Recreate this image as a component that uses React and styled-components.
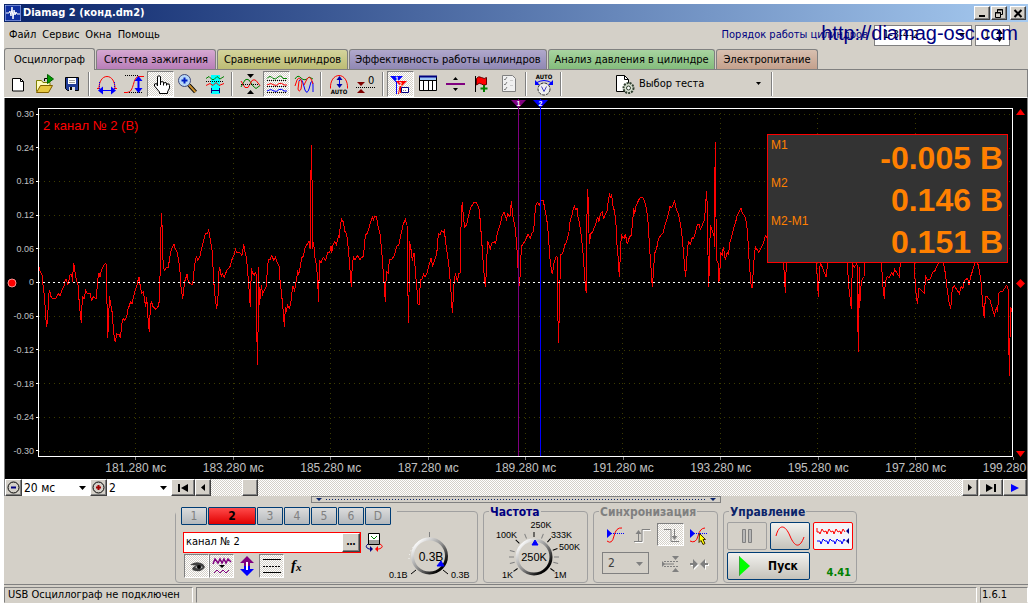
import React from "react";
import styled, { createGlobalStyle, css } from "styled-components";

const FACE = "#d4d0c8";
const UI_FONT = '"DejaVu Sans Condensed", "DejaVu Sans", "Liberation Sans", sans-serif';
const PLOT_FONT = '"Liberation Sans", Arial, sans-serif';

const dither = css`
  background: repeating-conic-gradient(#fff 0 25%, ${FACE} 0 50%) 0 0 / 2px 2px;
`;
const raised = css`
  border: 1px solid;
  border-color: #fff #404040 #404040 #fff;
  box-shadow: inset -1px -1px 0 #808080;
  background: ${FACE};
`;

const GlobalStyle = createGlobalStyle`
  * { box-sizing: border-box; }
  body { margin: 0; background: #fff; font: 11px/14px ${UI_FONT}; color: #000; }
  button, input, select { font: inherit; color: inherit; margin: 0; padding: 0; }
  svg { display: block; flex: none; }
`;

/* ---------- window frame ---------- */

const Page = styled.div`
  padding: 4px 4px 5px;
  min-width: 860px;
`;
const Window = styled.div`
  position: relative;
  background: ${FACE};
  overflow: hidden;
`;
const TitleBar = styled.header`
  display: flex;
  align-items: center;
  height: 18px;
  padding: 0 2px 0 1px;
  gap: 1px;
  background: linear-gradient(90deg, #0a246a, #a6caf0);
`;
const Title = styled.h1`
  flex: 1;
  margin: 0 0 0 1px;
  color: #fff;
  font: bold 11px/16px ${UI_FONT};
`;
const CaptionButton = styled.button`
  ${raised}
  display: grid;
  place-items: center;
  width: 16px;
  height: 14px;
  margin-left: ${(p) => (p.$apart ? 2 : 0)}px;
`;
const MenuBar = styled.nav`
  display: flex;
  align-items: center;
  height: 26px;
  padding: 0 18px 0 5px;
  gap: 6px;
`;
const MenuItem = styled.button`
  border: 0;
  background: none;
`;
const OrderLabel = styled.label`
  margin-left: auto;
  color: #000080;
`;
const OrderBox = styled.span`
  display: flex;
  align-items: center;
  width: ${(p) => p.$width}px;
  height: 21px;
  padding: 0 6px 0 8px;
  border: 1px solid #808080;
  background: #fff;
  margin-left: ${(p) => p.$gap || 0}px;
`;
const OrderSelect = styled.select`
  appearance: none;
  flex: 1;
  min-width: 0;
  border: 0;
  background: none;
`;
const OrderCount = styled.input`
  flex: 1;
  width: 0;
  min-width: 0;
  border: 0;
  background: none;
`;
const SiteLink = styled.a`
  position: absolute;
  top: 17px;
  right: 10px;
  color: #000080;
  font: 20px/24px ${PLOT_FONT};
  text-decoration: none;
`;

/* ---------- tabs ---------- */

const TabRow = styled.div`
  display: flex;
  align-items: flex-end;
  height: 22px;
  border-bottom: 1px solid #808080;
  gap: 1px;
`;
const Tab = styled.button`
  flex: 0 1 ${(p) => p.$width}px;
  height: ${(p) => (p.$active ? 22 : 20)}px;
  margin-bottom: ${(p) => (p.$active ? -1 : 0)}px;
  border: 1px solid #808080;
  border-bottom: 0;
  border-radius: 3px 3px 0 0;
  background: ${(p) => (p.$active ? FACE : `linear-gradient(${p.$from}, ${p.$to})`)};
  white-space: nowrap;
`;

/* ---------- toolbar ---------- */

const Toolbar = styled.div`
  display: flex;
  align-items: center;
  height: 28px;
  border-right: 1px solid #808080;
  border-bottom: 1px solid #fff;
`;
const ToolButton = styled.button`
  display: grid;
  place-items: center;
  width: 27px;
  height: 26px;
  border: 1px solid transparent;
  background: none;
  ${(p) => p.$pressed && css`${dither} border-color: #808080 #fff #fff #808080;`}
`;
const Separator = styled.span`
  width: 2px;
  height: 24px;
  margin: 0 3px;
  border-left: 1px solid #808080;
  border-right: 1px solid #fff;
`;
const TestButton = styled.button`
  display: flex;
  align-items: center;
  width: 203px;
  height: 26px;
  padding: 0 7px 0 48px;
  border: 0;
  background: none;
  & > span { flex: 1; text-align: left; margin-left: 2px; }
`;

/* ---------- plot ---------- */

const PlotArea = styled.main`
  display: grid;
  grid-template-columns: 33px 1fr 14px;
  grid-template-rows: 10px 349px 22px;
  overflow: hidden;
  border-left: 1px solid #808080;
  border-right: 1px solid #808080;
  background: #000;
  color: #c0c0c0;
  font-family: ${PLOT_FONT};
`;
const LevelAxis = styled.div`
  grid-area: 2 / 1;
  display: grid;
  align-items: center;
  padding-left: 2px;
  & > * { grid-area: 1 / 1; }
`;
const LevelList = styled.div`
  display: flex;
  flex-direction: column;
  justify-content: space-between;
  height: 349px;
`;
const Level = styled.span`
  display: flex;
  align-items: center;
  justify-content: flex-end;
  gap: 2px;
  font-size: 9px;
  line-height: 12px;
  &::after { content: ""; width: 2px; height: 1px; background: #fff; }
`;
const Plot = styled.div`
  grid-area: 2 / 2;
  position: relative;
  border: 1px solid #fff;
`;
const Trace = styled.svg`
  position: absolute;
  top: -1px;
  left: -1px;
  width: calc(100% + 2px);
  height: calc(100% + 2px);
`;
const PlotTitle = styled.h2`
  position: relative;
  margin: 0;
  padding: 9px 4px;
  color: #f00;
  font: 13px/16px ${PLOT_FONT};
`;
const Marker = styled.div`
  position: absolute;
  top: -10px;
  bottom: 0;
  left: ${(p) => p.$at}%;
  width: 15px;
  margin-left: -7px;
  background: linear-gradient(${(p) => p.$color}, ${(p) => p.$color}) 7px 0 / 1px 100% no-repeat;
`;
const Readout = styled.div`
  position: absolute;
  top: 25px;
  right: 4px;
  display: flex;
  justify-content: space-between;
  width: 241px;
  height: 129px;
  padding: 2px 4px 0 3px;
  border: 1px solid #ff0000;
  background: #333;
`;
const ReadoutNames = styled.div`
  display: grid;
  grid-auto-rows: 38px;
  align-content: start;
  color: #ff8000;
  font-size: 12px;
  line-height: 16px;
`;
const ReadoutValues = styled.div`
  display: grid;
  grid-auto-rows: 42px;
  align-content: start;
  color: #ff8000;
  font-size: 32px;
  line-height: 43px;
  font-weight: bold;
  text-align: right;
`;
const EdgeMarks = styled.div`
  grid-area: 2 / 3;
  display: flex;
  flex-direction: column;
  align-items: center;
  justify-content: space-between;
  padding: 1px 0 0;
`;
const TimeAxis = styled.div`
  grid-area: 3 / 1 / 4 / 4;
  display: grid;
  grid-template-columns: repeat(10, 1fr);
  margin: 0 -35px 0 82px;
`;
const Time = styled.span`
  display: flex;
  flex-direction: column;
  align-items: center;
  font-size: 12px;
  line-height: 17px;
  white-space: nowrap;
  &::before { content: ""; width: 1px; height: 3px; background: #808080; }
`;

/* ---------- scroll row ---------- */

const ScrollRow = styled.div`
  display: flex;
  height: 17px;
  border-left: 1px solid #808080;
  border-right: 1px solid #808080;
`;
const StepButton = styled.button`
  ${raised}
  display: grid;
  place-items: center;
  flex: none;
  width: ${(p) => p.$width}px;
  margin-left: ${(p) => p.$gap || 0}px;
`;
const ScaleBox = styled.span`
  position: relative;
  display: flex;
  width: ${(p) => p.$width}px;
  background: #fff;
  & > svg { position: absolute; right: 4px; top: 7px; pointer-events: none; }
`;
const ScaleSelect = styled.select`
  appearance: none;
  width: 100%;
  padding-left: 2px;
  border: 0;
  background: none;
  font: 12px/16px ${UI_FONT};
`;
const Track = styled.div`
  ${dither}
  flex: 1;
  display: flex;
  padding-left: 31px;
`;
const Thumb = styled.span`
  ${raised}
  width: 16px;
`;
const Splitter = styled.div`
  display: flex;
  align-items: center;
  gap: 4px;
  width: 40%;
  height: 7px;
  margin: 0 auto;
  padding: 0 4px;
  border: 1px solid #808080;
  &::before, &::after {
    content: "";
    border: 3px solid transparent;
    border-top-color: #0a246a;
    border-bottom-width: 0;
  }
`;
const SplitterDots = styled.span`
  flex: 1;
  height: 1px;
  background: repeating-linear-gradient(90deg, #0a246a 0 1px, transparent 1px 3px);
`;

/* ---------- control panels ---------- */

const Panels = styled.div`
  display: flex;
  justify-content: center;
  gap: 5px;
  padding: 8px 0 1px;
  border-bottom: 1px solid #808080;
`;
const Panel = styled.fieldset`
  min-width: 0;
  width: ${(p) => p.$width}px;
  height: 72px;
  margin: 0;
  padding: 0;
  border: 1px solid #a0a0a0;
  border-radius: 4px;
`;
const Legend = styled.legend`
  float: left;
  height: 14px;
  margin: -7px 0 0 5px;
  padding: 0 1px;
  background: ${FACE};
  color: ${(p) => p.$color};
  font: bold 12px/14px ${UI_FONT};
`;
const PanelBody = styled.div`
  clear: both;
`;
const ChannelRow = styled.div`
  display: flex;
  gap: 1px;
  width: 221px;
  margin-top: -5px;
  padding-left: 5px;
  background: ${FACE};
`;
const ChannelButton = styled.button`
  width: ${(p) => (p.$active ? 48 : 26)}px;
  height: 18px;
  border: 1px solid #003c74;
  border-radius: 1px;
  background: ${(p) =>
    p.$active ? "linear-gradient(#ff4a4a, #e00000)" : "linear-gradient(#dcdcdc, #b4b8bc)"};
  color: ${(p) => (p.$active ? "#000" : "#808080")};
  font: ${(p) => (p.$active ? "bold" : "normal")} 12px/16px ${UI_FONT};
`;
const ChannelTop = styled.div`
  display: flex;
  align-items: center;
  gap: 3px;
  margin: 6px 0 1px 7px;
`;
const NameBox = styled.div`
  display: flex;
  width: 178px;
  height: 21px;
  border: 1px solid #f00;
  background: #fff;
`;
const NameInput = styled.input`
  flex: 1;
  min-width: 0;
  padding-left: 2px;
  border: 0;
  background: none;
`;
const MoreButton = styled.button`
  ${raised}
  width: 18px;
  font: bold 10px/10px ${UI_FONT};
`;
const ChannelColumns = styled.div`
  display: flex;
`;
const ChannelTools = styled.div`
  display: flex;
  padding-left: 8px;
`;
const SmallTool = styled(ToolButton)`
  width: 25px;
  height: 24px;
`;
const Dial = styled.svg`
  font-family: ${PLOT_FONT};
  font-size: 9px;
  overflow: visible;
`;
const SyncGrid = styled.div`
  display: grid;
  grid-template-columns: repeat(4, 28px);
  grid-template-rows: 24px 24px;
  row-gap: 5px;
  padding: 4px 0 0 7px;
  & > button { width: 27px; height: 23px; }
`;
const SyncSelect = styled.span`
  position: relative;
  grid-column: span 2;
  width: 47px;
  height: 22px;
  margin-left: 1px;
  border: 1px solid #808080;
  color: #404040;
  & > svg { position: absolute; right: 5px; top: 9px; }
  & > select { position: relative; padding-left: 5px; height: 20px; }
`;
const ControlGrid = styled.div`
  display: grid;
  grid-template-columns: repeat(3, 40px);
  grid-template-rows: 28px 28px;
  gap: 2px 3px;
  padding: 3px 0 0 3px;
`;
const ModeButton = styled.button`
  display: flex;
  align-items: center;
  justify-content: center;
  gap: 18px;
  grid-column: span ${(p) => p.$span || 1};
  border: 1px solid ${(p) => p.$edge || "#003c74"};
  border-radius: 2px;
  background: ${(p) => p.$fill || "linear-gradient(#f2f1ee, #c4c2ba)"};
  font: bold 12px/16px ${UI_FONT};
`;
const Rate = styled.output`
  align-self: end;
  justify-self: end;
  margin-right: 2px;
  color: #008000;
  font: bold 11px/14px ${UI_FONT};
`;
const StatusBar = styled.footer`
  display: flex;
  gap: 3px;
  padding-top: 2px;
`;
const StatusCell = styled.span`
  flex: ${(p) => (p.$width ? `0 0 ${p.$width}px` : 1)};
  height: 16px;
  padding-left: ${(p) => (p.$tight ? 1 : 3)}px;
  border: 1px solid;
  border-color: #808080 #fff ${FACE} #808080;
`;

/* ---------- icons ---------- */

const Icon = ({ children, w = 24, h = 24, ...rest }) => (
  <svg width={w} height={h} viewBox={`0 0 ${w} ${h}`} fill="none" stroke="#000" aria-hidden="true" {...rest}>
    {children}
  </svg>
);
const Down = ({ color = "#000" }) => (
  <Icon w={7} h={4} stroke="none"><path d="M0 0h7L3.500 4z" fill={color} /></Icon>
);

const icons = {
  create: <Icon><path d="M6.500 6.500h8l3 3v9.500h-11z" fill="#fff" /><path d="M14.500 6.500v3h3" /></Icon>,
  open: (
    <Icon>
      <path d="M3.500 19.500v-11h5l1.500 2h7v3" fill="#fffbc0" stroke="#808000" />
      <path d="M3.500 20.500l4-7h12l-4 7z" fill="#e8c840" stroke="#806000" />
      <path d="M11.500 9V6.500h3" /><path d="M14.500 2.500l6 4.500-6 4.500z" fill="#009800" stroke="#006000" />
    </Icon>
  ),
  save: (
    <Icon>
      <path d="M5.500 5.500h13v13h-11l-2-2z" fill="#203c98" />
      <path d="M8 6h8v6H8z" fill="#fff" stroke="none" /><path d="M9 8.500h6M9 10.500h6" stroke="#a0a0a0" />
      <path d="M9 15h6v4H9z" fill="#ddd" stroke="none" /><path d="M10 15h2v3h-2z" fill="#000" stroke="none" />
    </Icon>
  ),
  width: (
    <Icon>
      <path d="M2 16.500h2C4 10 7 4.500 12 4.500S20 10 20 16.500h2" stroke="#f00" />
      <path d="M4.500 10v10M19.500 10v10" stroke="#00f" strokeDasharray="1 1" />
      <path d="M5 18.500h14" stroke="#00f" /><path d="M3 18.500l5-4v8zM21 18.500l-5-4v8z" fill="#00f" stroke="none" />
    </Icon>
  ),
  height: (
    <Icon>
      <path d="M2 20.500h3c8 0 5-16 12-16h5" stroke="#f00" />
      <path d="M3 3.500h13M7 20.500h13" strokeDasharray="1 1" />
      <path d="M16.500 6v12" stroke="#00f" strokeWidth="2" /><path d="M16.500 4l4 5h-8zM16.500 21l4-5h-8z" fill="#00f" stroke="none" />
    </Icon>
  ),
  hand: (
    <Icon>
      <path d="M8.500 14V4.500q1.500-1.500 3 0V11l1-1.500 2 .5.500 1 2-.5 1 1.500 2 0 .5 1.500V16l-2 4v1.500h-8v-1.500l-5-6v-2l2-.5z" fill="#fff" />
      <path d="M11.500 10v3M14.500 10.500v3M17.500 11.500v2" />
    </Icon>
  ),
  zoom: (
    <Icon>
      <path d="M13 13l6.500 7" stroke="#000" strokeWidth="4" /><path d="M13 13l6.500 7" stroke="#c89030" strokeWidth="2" />
      <circle cx="8.500" cy="8.500" r="6" fill="#b8d8f8" stroke="#404878" />
      <path d="M5.500 8.500h6M8.500 5.500v6" stroke="#0020c0" strokeWidth="2" />
    </Icon>
  ),
  region: (
    <Icon>
      <path d="M8 3h9v19H8z" fill="#0ff" stroke="none" />
      <path d="M3 6.500l3-2 3 3h2l3-3 3 2.500 4-2.500" stroke="#008000" /><path d="M3 9.500h18" strokeDasharray="1 1" />
      <path d="M3 13.500l4-2 3 2 3-3 3 3 5-2" stroke="#f00" /><path d="M8.500 16v5M16.500 16v5M9 18.500h8" stroke="#000080" />
    </Icon>
  ),
  overlay: (
    <Icon>
      <path d="M3 15l4-7q2-1.500 4 0l4 6 3 2.500 4-3" stroke="#008000" /><path d="M3 9l4 6.500h3l4-7q2-1.500 4 0l4 5" stroke="#f00" />
      <path d="M3 12.500h18" strokeDasharray="1 1" /><path d="M9 2h7l-3.500 4zM9 22h7l-3.500-4z" fill="#000" stroke="none" />
    </Icon>
  ),
  split: (
    <Icon>
      <path d="M2 6.500q3-4 6 0 3 1.500 5-1.500 3-2.500 5 1.500h4" stroke="#008000" /><path d="M2 8.500h20M2 14.500h20M2 20.500h20" strokeDasharray="1 1" />
      <path d="M2 13q4-3 7 0 3 1.500 5-1.500 3-1 5 1.500h3" stroke="#f00" /><path d="M2 19q4-3 7 0 3 1.500 5-1.500 3-1 5 1.500h3" stroke="#00f" />
    </Icon>
  ),
  merge: (
    <Icon>
      <path d="M3 7q3-5 6-1 4 4 8-1l4 2" stroke="#008000" />
      <path d="M7 9q2-4 4 2l2 7q2 5 4-1l2-7q2-2 2 4v6" stroke="#00f" /><path d="M3 14l2-6q3-5 5 3l-1 6q-2 4-3 0l1-8M12 13l3-6q3-4 5 2l1 3" stroke="#f00" />
    </Icon>
  ),
  auto: (
    <Icon>
      <path d="M3.500 16.500C3 9 7 3.500 12 3.500S21 9 20.500 16.500" stroke="#f00" /><path d="M12.500 6v9" stroke="#00f" />
      <path d="M12.500 4l3 4h-6zM12.500 16l3-4h-6z" fill="#00a" stroke="none" />
      <text x="12" y="22" textAnchor="middle" fontSize="6" fontWeight="bold" fill="#000" stroke="none">AUTO</text>
    </Icon>
  ),
  zero: (
    <Icon>
      <path d="M3 10h8l-4 4zM3 21h8l-4-4z" fill="#800000" stroke="none" /><path d="M2 15.500h19" strokeDasharray="1 1" />
      <text x="14" y="12" fontSize="11" fill="#000" stroke="none">0</text>
    </Icon>
  ),
  markers: (
    <Icon>
      <path d="M7.500 9v13" stroke="#00f" /><path d="M1 4h13L7.500 11z" fill="#00f" stroke="none" />
      <path d="M11.500 12l-2 10M11.500 14v7" stroke="#f00" /><path d="M7 9h11l-6 6z" fill="#f00" stroke="none" />
      <path d="M12.500 15.500h7v5h-7z" fill="#fff" stroke="#000080" /><path d="M14 18.500h4" stroke="#808080" strokeDasharray="1 1" />
      <text x="6" y="9" fontSize="6" fontWeight="bold" fill="#fff" stroke="none">1</text>
      <text x="10" y="14" fontSize="5" fontWeight="bold" fill="#fff" stroke="none">2</text>
    </Icon>
  ),
  table: (
    <Icon>
      <path d="M3.500 4.500h17v14h-17z" fill="#fff" /><path d="M4 5h16v3H4z" fill="#a0c8f8" stroke="none" />
      <path d="M3 4.500h18" stroke="#000080" strokeWidth="2" />
      <path d="M3.500 8.500h17M7.500 8v10M12.500 8v10M16.500 8v10" />
    </Icon>
  ),
  level: (
    <Icon>
      <path d="M3 11h19v2H3z" fill="#800080" stroke="none" /><path d="M10 8h5l-2.500-3zM10 16h5l-2.500 3z" fill="#000" stroke="none" />
    </Icon>
  ),
  flag: (
    <Icon>
      <path d="M5.500 4v16" /><path d="M6.500 6.500q2-3 5-1t5 0v7q-3 1.500-5-.5t-5 1z" fill="#f00" stroke="#600000" />
      <path d="M14 13v7M10.500 16.500h7" stroke="#008000" strokeWidth="2" />
    </Icon>
  ),
  checklist: (
    <Icon>
      <path d="M5.500 3.500h10l3 3v13h-13z" fill="#f0f0f0" stroke="#808080" strokeWidth="1" />
      <path d="M7 7l1 1 2-3M7 12l1 1 2-3M7 17l1 1 2-3" stroke="#808080" /><path d="M13 8.500h3M13 13.500h3" stroke="#ccc" />
    </Icon>
  ),
  autoVolt: (
    <Icon h={26}>
      <text x="12" y="7" textAnchor="middle" fontSize="6" fontWeight="bold" fill="#000" stroke="none">AUTO</text>
      <path d="M4 11q8-5 16 0" stroke="#00f" /><path d="M3 8v5h5zM21 8v5h-5z" fill="#00f" stroke="none" />
      <circle cx="12" cy="17" r="6" fill="#eee" stroke="#303030" strokeDasharray="3 1" /><path d="M9.500 14.500l2.500 5 2.500-5" stroke="#4040c0" />
    </Icon>
  ),
  test: (
    <Icon>
      <path d="M3.500 3.500h8l4 4v12h-12z" fill="#fff" /><path d="M11.500 3.500v4h4" />
      <circle cx="15.500" cy="16" r="5" fill="#d8e0d0" stroke="#304030" strokeWidth="2" strokeDasharray="2 1" /><circle cx="15.500" cy="16" r="2" fill="#fff" stroke="#304030" />
    </Icon>
  ),
  eye: (
    <Icon w={20} h={20} stroke="none">
      <path d="M3 9q6-5 13-1l2 3q-3 5-9 4-3 0-4-2 2-4 6-3-5-1-8-1z" fill="#404040" /><path d="M8 11q4-2 8 0-4 4-8 0z" fill="#b0b0b0" /><circle cx="12" cy="11" r="2" fill="#000" />
    </Icon>
  ),
  invert: (
    <Icon w={20} h={20} stroke="#800080">
      <path d="M1 8l2-5 3 4 2-4 2 4 2-4 2 4 2-4 3 3" strokeWidth="1.500" /><path d="M7 9h6l-3 3z" fill="#000" stroke="none" /><path d="M2 17l3-3 3 3 3-3 3 3 3-3" />
    </Icon>
  ),
  shift: (
    <Icon w={20} h={22} stroke="none">
      <path d="M10 1l7 7h-4v4H7V8H3z" fill="#800080" /><path d="M10 21l7-7h-4v-3H7v3H3z" fill="#00f" /><path d="M9 7h2v8H9z" fill="#fff" />
    </Icon>
  ),
  lines: (
    <Icon w={20} h={20}><path d="M1 3.500h18M1 16.500h18" /><path d="M1 10.500h18" strokeDasharray="2 1" /></Icon>
  ),
  swap: (
    <Icon w={20} h={22}>
      <path d="M4.500 2.500h11v11h-11z" fill="#fff" /><path d="M5 9h10v4H5z" fill="#a0a0a0" stroke="none" /><path d="M7 5l3 3 3-3" stroke="#008000" />
      <path d="M4 13q-4 3 1 5h2" stroke="#000080" /><path d="M6 15v6l3-3z" fill="#000080" stroke="none" />
      <path d="M16 13q5 3-1 5h-2" stroke="#f00" /><path d="M14 15v6l-3-3z" fill="#f00" stroke="none" />
    </Icon>
  ),
  syncLevel: (
    <Icon w={22} h={20}>
      <path d="M3 16q5 4 7-5t8-8" stroke="#f00" /><path d="M3 8.500h18" stroke="#00f" strokeDasharray="1 1" /><path d="M3 4v9l5-4.500z" fill="#00f" stroke="none" />
    </Icon>
  ),
  rise: (
    <Icon w={22} h={20} stroke="#808080">
      <path d="M3 17.500h8v-12h8" stroke="#fff" /><path d="M2 16.500h8v-12h8M6.500 6v10" /><path d="M3.500 9h6l-3-4z" fill="#808080" stroke="none" />
    </Icon>
  ),
  fall: (
    <Icon w={22} h={20} stroke="#808080"><path d="M4 4.500h7v12h8M14.500 4v9" /><path d="M11.500 11h6l-3 4z" fill="#808080" stroke="none" /></Icon>
  ),
  syncPick: (
    <Icon w={22} h={20}>
      <path d="M2 16q6 3 8-5t7-8" stroke="#f00" /><path d="M2 8.500h18" stroke="#00f" strokeDasharray="1 1" /><path d="M2 4v9l5-4.500z" fill="#00f" stroke="none" />
      <path d="M11.500 8.500l6 6h-2.500l2 4-2 1-2-4-2 2z" fill="#ff0" stroke="#403000" />
    </Icon>
  ),
  expand: (
    <Icon w={22} h={20} stroke="#808080">
      <path d="M4 7.500h15M4 12.500h15" strokeDasharray="2 1" /><path d="M3 10h11" /><path d="M12 2h7l-3.500 4zM12 18h7l-3.500-4zM2 7v6l3-3z" fill="#808080" stroke="none" />
    </Icon>
  ),
  narrow: (
    <Icon w={22} h={20} stroke="none">
      <path d="M3 10h3V6l5 5-5 5v-4H3zM21 10h-3V6l-5 5 5 5v-4h3z" fill="#fff" />
      <path d="M2 9h3V5l5 5-5 5v-4H2zM20 9h-3V5l-5 5 5 5v-4h3z" fill="#808080" />
    </Icon>
  ),
  pause: (
    <Icon w={12} h={16} stroke="#808080"><path d="M1.500 1.500h3v13h-3zM7.500 1.500h3v13h-3z" fill="#b8b8b8" /></Icon>
  ),
  sine: <Icon w={30} h={20} stroke="#f00"><path d="M1 10C4-2 10-2 15 10s10 12 14 1" /></Icon>,
  waves: (
    <Icon w={34} h={20}>
      <path d="M1 2v4h2l1 2 2-5 2 3 2-1 1 3 2-5 2 3 2-1 1 3 2-5 2 3 2-1 1 3 2-5 2 3" stroke="#f00" />
      <path d="M1 15h3l1 3 2-5 2 2h2l1 3 2-5 2 2h2l1 3 2-5 2 2h2l1 3 2-5 1 2" stroke="#00f" />
      <path d="M33 2v6l-3-3zM33 12v6l-3-3z" fill="#000080" stroke="none" />
    </Icon>
  ),
};

/* ---------- trace data: thirds of a pixel, one run per screen section ---------- */

const RUNS = [
  { at: 0, d: "117,502 120,512 126,525 129,555 134,595 137,650 140,680 143,655 146,585 149,570 152,588 158,596 168,594 176,580 180,588 186,570 192,558 196,540 199,538 203,556 207,540 211,522 215,524 218,545 220,488 223,500 227,530 234,556 238,612 244,670 247,590 252,596 257,572 262,580 270,580 275,604 279,590 289,596 293,540 297,520 300,530 305,508 310,498 318,489 320,560 323,713 326,660 328,588 332,612 337,640 341,700 346,727 350,702 358,703 361,713 366,670 370,655 374,660 380,650 384,628 392,605 396,612 404,575 410,560 413,545 417,532 421,560 425,580 430,575 434,600 437,622 440,590 445,670 448,695 451,620 454,603 458,618 467,628 474,620 479,600 481,465 484,340 487,390 488,470 490,490 493,514 497,504 505,503 508,480 513,452 517,440 522,433 526,448 530,452 535,475 539,500 543,560 548,597 551,570 554,545 561,523 565,545 570,550 578,555 581,520 585,490 589,470 593,480 600,468 604,450 610,425 616,400 622,400 626,391 630,415 636,450 639,500 643,570 650,628 654,590 656,520 659,500 664,530 667,520 673,532 680,512 690,500 697,475 703,462 706,448 710,458 718,457 726,466 731,433 735,455 740,478 745,540 751,622 754,505" },
  { at: 750, d: "4,505 8,520 13,525 18,515 20,650 22,795 25,650 26,500 28,615 31,590 34,555 38,582 43,570 49,560 52,510 55,478 60,480 65,467 71,480 76,472 81,485 87,498 90,540 95,585 98,615 101,650 103,680 106,622 109,635 113,615 118,625 122,612 125,585 128,557 134,572 138,545 143,515 146,522 151,500 155,472 160,470 166,440 172,432 177,424 181,448 182,295 184,136 187,292 188,448 191,425 194,470 200,500 203,545 206,605 208,482 213,488 220,472 227,482 233,458 239,458 243,438 245,458 249,435 254,426 259,434 263,418 266,405 268,415 271,375 275,358 281,368 284,393 290,403 295,445 299,495 304,562 307,490 311,472 315,480 323,466 330,481 334,472 341,470 343,432 347,405 353,398 360,372 367,352 370,360 375,348 379,348 383,374 390,403 395,450 400,520 406,605 409,515 415,520 418,480 425,478 434,465 440,438 446,436 453,402 460,372 466,358 471,375 473,500 475,670 477,590 478,423 482,440 487,482 490,465 493,458 496,515 501,570 504,612 508,612 511,540 516,538 521,523 525,530 530,522 536,500 543,474 548,500 553,482 560,463 563,430 565,400 570,405 575,392 580,398 583,392 588,435 593,470 598,510 603,575 607,638 610,590 613,535 617,523 622,545 627,520 631,518 632,435 634,335 637,307 640,350 644,382 650,374 656,345 661,325 668,313 671,307 678,307 685,320 688,330 692,380 697,450 702,520 706,562 710,500 712,423 716,432 721,447 726,428 733,426 737,430 743,395 750,375 757,345 762,335 769,358 773,342 780,350 784,302 788,345 795,380 800,430 803,488 808,557" },
  { at: 1530, d: "28,555 31,520 34,440 40,430 47,420 54,402 61,415 66,400 71,392 74,350 77,318 82,307 88,315 92,302 99,300 103,318 109,350 113,378 117,435 121,490 127,523 132,490 137,472 141,468 143,590 145,728 148,640 150,540 152,465 158,460 164,435 170,425 177,395 180,365 186,345 190,325 193,318 198,330 201,325 204,350 209,372 213,403 218,445 223,515 226,555 229,580 230,425 232,268 235,300 237,400 239,432 241,402 248,395 254,380 259,365 263,350 266,366 272,340 277,335 281,358 285,345 291,333 295,300 299,284 302,292 305,283 308,315 314,335 318,375 321,435 325,480 328,532 331,465 334,405 338,412 343,415 346,402 352,433 358,412 364,405 368,365 371,325 374,342 378,318 386,300 392,292 398,292 404,305 410,330 415,375 418,430 422,490 427,562 430,520 434,460 440,445 445,418 453,405 459,400 465,375 472,355 480,318 483,325 487,320 494,302 498,325 505,342 510,365 515,395 519,440 524,500 527,532 530,480 535,425 541,433 547,412 551,415 557,395 562,374 568,374 571,388 577,375 583,360 587,320 589,274 592,318 594,465 596,562 599,460 601,374 607,392 612,408 613,440 614,285 616,127 618,350 620,480 624,488 627,545 631,490 632,458 637,465 640,440 646,480 652,457 656,462 659,430 665,410 671,385 676,370 682,345 687,335 693,325 698,342 703,345 709,365 713,400 716,465 720,515 724,562 727,562 731,490 736,440 741,448 746,458 753,445 760,430 766,406 771,412" },
  { at: 2280, d: "21,412 40,350 60,400 70,486 73,520 76,580 79,486 110,400 140,340 160,420 169,486 172,540 175,590 178,520 181,486 188,505 198,530 203,490 206,486 230,360 250,400 262,486 266,560 271,600 274,628 277,490 283,502 291,490 293,630 295,755 298,500 299,625 302,565 306,540 312,530 314,486 335,400 355,420 364,486 369,560 373,597 376,545 381,530 388,532 395,518 400,525 404,507 411,520 418,530 421,486 440,410 455,430 463,486 466,560 472,612 477,565 484,570 490,578 493,580 497,530 503,540 512,536 517,518 525,512 530,500 538,486 544,475 550,486 556,520 560,555 566,600 572,628 577,565 583,558 590,568 598,580 603,560 609,565 614,540 623,535 627,555 632,530 640,505 645,486 650,480 656,500 663,545 668,610 673,655 676,590 681,590 690,600 697,625 703,646 709,625 713,635 716,580 722,575 727,575 734,565 740,556 745,570 746,700 748,827 750,715 752,620 755,635" },
];
const LEVELS = ["0.30", "0.24", "0.18", "0.12", "0.06", "0", "-0.06", "-0.12", "-0.18", "-0.24", "-0.30"];
const LEVEL_Y = [6, 40, 73, 107, 140, 174, 208, 242, 275, 309, 343];
const TIME_X = [97, 195, 292, 390, 487, 584, 682, 779, 877];
const TIMES = [181, 183, 185, 187, 189, 191, 193, 195, 197, 199];

function Waveform() {
  return (
    <Trace viewBox="0 0 975 349" preserveAspectRatio="none" shapeRendering="crispEdges" fill="none" role="img" aria-label="Сигнал канала 2">
      <g stroke="#3c3c00" strokeDasharray="1 4">
        {LEVEL_Y.map((y) => <path key={y} d={`M1 ${y + 0.5}H974`} />)}
        {TIME_X.map((x) => <path key={x} d={`M${x + 0.5} 5V348`} />)}
      </g>
      <svg width="975" height="349" viewBox="114 24 2925 1047" preserveAspectRatio="none">
        {RUNS.map((run) => (
          <polyline key={run.at} points={run.d} transform={`translate(${run.at} 0)`} stroke="#f00" strokeWidth="3" />
        ))}
      </svg>
      <path d="M0 174.500H974" stroke="#fff" strokeDasharray="2 3" />
    </Trace>
  );
}

function PlotMarker({ at, color, name }) {
  return (
    <Marker $at={at} $color={color}>
      <svg width="15" height="9" viewBox="0 0 15 9">
        <path d="M0 1h15L7.500 9z" fill={color} />
        <text x="7.500" y="7" textAnchor="middle" fontSize="7" fontWeight="bold" fill="#fff">{name}</text>
      </svg>
    </Marker>
  );
}

function Ring({ id, x, y, r }) {
  return (
    <>
      <defs>
        <linearGradient id={id} x1="0" y1="0" x2="1" y2="1">
          <stop offset="0.100" stopColor="#fff" /><stop offset="0.500" stopColor="#909090" /><stop offset="0.850" stopColor="#000" />
        </linearGradient>
      </defs>
      <circle cx={x} cy={y} r={r} fill={FACE} stroke={`url(#${id})`} strokeWidth="3" />
    </>
  );
}

function RangeDial() {
  return (
    <Dial width="90" height="56" viewBox="0 0 90 56" role="img" aria-label="Диапазон 0.3В">
      <path d="M45.500 7v5" stroke="#808080" />
      <path d="M25 34a21 21 0 0 1 16-20" stroke="#fff" strokeDasharray="1 3" fill="none" />
      <path d="M32 45l-5 4M59 45l5 4" stroke="#000" />
      <Ring id="ring-range" x={45.5} y={31} r={17} />
      <path d="M53 41l4-5 3 5z" fill="#00f" stroke="#00f" />
      <text x="47" y="36" textAnchor="middle" fontSize="12">0.3В</text>
      <text x="5" y="53">0.1В</text>
      <text x="67" y="53">0.3В</text>
    </Dial>
  );
}

const DIAL_TICKS = [
  [-125, true], [-105], [-90], [-75], [-47, true], [-22], [0, true], [22], [42, true], [70, true], [90], [105], [125, true],
];

function RateDial() {
  return (
    <Dial width="103" height="63" viewBox="0 0 103 63" role="img" aria-label="Частота 250K">
      {DIAL_TICKS.map(([angle, dark]) => (
        <path key={angle} d="M50 18v-5" transform={`rotate(${angle} 50 38)`} stroke={dark ? "#000" : "#808080"} />
      ))}
      <Ring id="ring-rate" x={50} y={38} r={17} />
      <path d="M48 26l3-5 3 5z" fill="#00f" stroke="#00f" />
      <text x="50" y="42" textAnchor="middle" fontSize="11">250K</text>
      <text x="57" y="9" textAnchor="middle">250K</text>
      <text x="12" y="19">100K</text>
      <text x="67" y="19">333K</text>
      <text x="75" y="31">500K</text>
      <text x="18" y="59">1K</text>
      <text x="70" y="59">1M</text>
    </Dial>
  );
}

const TABS = [
  ["Осциллограф", 91],
  ["Система зажигания", 120, "#d6a8d2", "#b87eb8"],
  ["Сравнение цилиндров", 131, "#d4d49c", "#bcbc74"],
  ["Эффективность работы цилиндров", 198, "#b0a8cc", "#9088b4"],
  ["Анализ давления в цилиндре", 167, "#a8d4a0", "#84bc7c"],
  ["Электропитание", 102, "#d8c0b0", "#c4a08c"],
];
const TOOLS = [
  ["create", "Создать"], ["open", "Открыть"], ["save", "Сохранить"], null,
  ["width", "Ширина"], ["height", "Высота"], ["hand", "Рука", true], ["zoom", "Увеличить"], ["region", "Область"], null,
  ["overlay", "Совместить"], ["split", "Разнести", true], ["merge", "Наложить"], null,
  ["auto", "Авто"], ["zero", "Ноль"], null,
  ["markers", "Маркеры", true], ["table", "Таблица"], ["level", "Уровень"], ["flag", "Закладка"], ["checklist", "Список"], null,
  ["autoVolt", "Авто диапазон"], null,
];
const CHANNELS = ["1", "2", "3", "4", "5", "6", "D"];

export default function App() {
  return (
    <Page>
      <GlobalStyle />
      <Window>
        <TitleBar>
          <Icon w={16} h={16}>
            <path d="M0 0h16v16H0z" fill="#1030a0" stroke="#c0d0ff" />
            <path d="M1 8h3l1-2 1 5 1-9 1 12 1-9 1 5 1-3 1 2h3" stroke="#fff" />
          </Icon>
          <Title>Diamag 2 (конд.dm2)</Title>
          <CaptionButton aria-label="Свернуть"><Icon w={10} h={9}><path d="M2 7h6" strokeWidth="2" /></Icon></CaptionButton>
          <CaptionButton aria-label="Восстановить">
            <Icon w={10} h={9}><path d="M3.500 3V.5h5v5H7M3 1h6M1.500 3.500h5v5h-5zM1 4h6" /></Icon>
          </CaptionButton>
          <CaptionButton $apart aria-label="Закрыть"><Icon w={10} h={9} strokeWidth="2"><path d="M1.500 1l7 7M8.500 1l-7 7" /></Icon></CaptionButton>
        </TitleBar>

        <MenuBar>
          {["Файл", "Сервис", "Окна", "Помощь"].map((name) => <MenuItem key={name}>{name}</MenuItem>)}
          <OrderLabel htmlFor="order">Порядок работы цилиндров</OrderLabel>
          <OrderBox $width={98}>
            <OrderSelect id="order"><option>1-3-4-2</option></OrderSelect>
            <Down />
          </OrderBox>
          <OrderBox $width={35} $gap={-3}>
            <OrderCount defaultValue="1" aria-label="Цилиндр" />
            <Icon w={7} h={13} stroke="none"><path d="M0 5h7L3.500 0zM0 8h7l-3.500 5z" fill="#000" /></Icon>
          </OrderBox>
        </MenuBar>
        <SiteLink href="http://diamag-osc.com">http://diamag-osc.com</SiteLink>

        <TabRow role="tablist">
          {TABS.map(([name, width, from, to]) => (
            <Tab key={name} role="tab" $active={!from} $width={width} $from={from} $to={to}>{name}</Tab>
          ))}
        </TabRow>

        <Toolbar>
          {TOOLS.map((tool, i) =>
            tool ? (
              <ToolButton key={i} aria-label={tool[1]} $pressed={tool[2]}>{icons[tool[0]]}</ToolButton>
            ) : (
              <Separator key={i} />
            )
          )}
          <TestButton>{icons.test}<span>Выбор теста</span><Icon w={5} h={3} stroke="none"><path d="M0 0h5L2.500 3z" fill="#000" /></Icon></TestButton>
          <Separator />
        </Toolbar>

        <PlotArea>
          <LevelAxis>
            <Icon w={10} h={10}><circle cx="5" cy="5" r="4" fill="#f00" stroke="#ff9090" /></Icon>
            <LevelList>{LEVELS.map((v) => <Level key={v}>{v}</Level>)}</LevelList>
          </LevelAxis>
          <Plot>
            <Waveform />
            <PlotTitle>2 канал № 2 (В)</PlotTitle>
            <PlotMarker at={49.23} color="#800080" name="1" />
            <PlotMarker at={51.49} color="#0000ff" name="2" />
            <Readout>
              <ReadoutNames><span>M1</span><span>M2</span><span>M2-M1</span></ReadoutNames>
              <ReadoutValues><span>-0.005 В</span><span>0.146 В</span><span>0.151 В</span></ReadoutValues>
            </Readout>
          </Plot>
          <EdgeMarks>
            <Icon w={9} h={6} stroke="none"><path d="M4.500 0L9 6H0z" fill="#f00" /></Icon>
            <Icon w={9} h={9} stroke="none"><path d="M4.500 0L9 4.500 4.500 9 0 4.500z" fill="#f00" /></Icon>
            <Icon w={9} h={6} stroke="none"><path d="M4.500 6L9 0H0z" fill="#f00" /></Icon>
          </EdgeMarks>
          <TimeAxis>{TIMES.map((t) => <Time key={t}>{t}.280 мс</Time>)}</TimeAxis>
        </PlotArea>

        <ScrollRow>
          <StepButton $width={17} aria-label="Сжать"><Icon w={13} h={13}><circle cx="6.500" cy="6.500" r="5.500" /><path d="M4 6.500h5" stroke="#000080" strokeWidth="2" /></Icon></StepButton>
          <ScaleBox $width={68}>
            <ScaleSelect aria-label="Развертка"><option>20 мс</option></ScaleSelect>
            <Down />
          </ScaleBox>
          <StepButton $width={17} aria-label="Растянуть"><Icon w={13} h={13}><circle cx="6.500" cy="6.500" r="5.500" /><path d="M4 6.500h5M6.500 4v5" stroke="#a00000" strokeWidth="2" /></Icon></StepButton>
          <ScaleBox $width={64}>
            <ScaleSelect aria-label="Масштаб"><option>2</option></ScaleSelect>
            <Down />
          </ScaleBox>
          <StepButton $width={24} aria-label="В начало"><Icon w={12} h={8} stroke="none"><path d="M1 0h2v8H1zM11 0v8L4 4z" fill="#000" /></Icon></StepButton>
          <StepButton $width={16} aria-label="Назад"><Icon w={4} h={7} stroke="none"><path d="M4 0v7L0 3.500z" fill="#000" /></Icon></StepButton>
          <Track><Thumb /></Track>
          <StepButton $width={16} aria-label="Вперед"><Icon w={4} h={7} stroke="none"><path d="M0 0v7l4-3.500z" fill="#000" /></Icon></StepButton>
          <StepButton $width={24} $gap={1} aria-label="В конец"><Icon w={12} h={8} stroke="none"><path d="M1 0l7 4-7 4zM9 0h2v8H9z" fill="#000" /></Icon></StepButton>
          <StepButton $width={24} aria-label="Воспроизвести"><Icon w={8} h={8} stroke="none"><path d="M0 0l8 4-8 4z" fill="#00f" /></Icon></StepButton>
        </ScrollRow>

        <Splitter><SplitterDots /></Splitter>

        <Panels>
          <Panel $width={303} aria-label="Канал">
            <ChannelRow>
              {CHANNELS.map((c) => <ChannelButton key={c} $active={c === "2"}>{c}</ChannelButton>)}
            </ChannelRow>
            <ChannelColumns>
              <div>
                <ChannelTop>
                  <NameBox>
                    <NameInput defaultValue="канал № 2" aria-label="Имя канала" />
                    <MoreButton aria-label="Выбрать">…</MoreButton>
                  </NameBox>
                  {icons.swap}
                </ChannelTop>
                <ChannelTools>
                  <SmallTool $pressed aria-label="Показать">{icons.eye}</SmallTool>
                  <SmallTool $pressed aria-label="Фильтр">{icons.invert}</SmallTool>
                  <SmallTool aria-label="Инверсия">{icons.shift}</SmallTool>
                  <SmallTool $pressed aria-label="Линии">{icons.lines}</SmallTool>
                  <SmallTool aria-label="Функция">
                    <Icon w={18} h={18} stroke="none" fontFamily="Liberation Serif, serif" fontStyle="italic" fontWeight="bold">
                      <text x="3" y="13" fontSize="15" fill="#000">f</text><text x="8" y="14" fontSize="11" fill="#000">x</text>
                    </Icon>
                  </SmallTool>
                </ChannelTools>
              </div>
              <RangeDial />
            </ChannelColumns>
          </Panel>

          <Panel $width={105}>
            <Legend $color="#000080">Частота</Legend>
            <PanelBody><RateDial /></PanelBody>
          </Panel>

          <Panel $width={125}>
            <Legend $color="#808080">Синхронизация</Legend>
            <PanelBody>
              <SyncGrid>
                <ToolButton aria-label="Уровень">{icons.syncLevel}</ToolButton>
                <ToolButton aria-label="Фронт">{icons.rise}</ToolButton>
                <ToolButton $pressed aria-label="Спад">{icons.fall}</ToolButton>
                <ToolButton aria-label="Выбор уровня">{icons.syncPick}</ToolButton>
                <SyncSelect>
                  <ScaleSelect aria-label="Канал синхронизации"><option>2</option></ScaleSelect>
                  <Down color="#808080" />
                </SyncSelect>
                <ToolButton aria-label="Шире">{icons.expand}</ToolButton>
                <ToolButton aria-label="Уже">{icons.narrow}</ToolButton>
              </SyncGrid>
            </PanelBody>
          </Panel>

          <Panel $width={134}>
            <Legend $color="#0a246a">Управление</Legend>
            <PanelBody>
              <ControlGrid>
                <ModeButton $edge="#a0a0a0" $fill={FACE} aria-label="Пауза">{icons.pause}</ModeButton>
                <ModeButton aria-label="Один сигнал">{icons.sine}</ModeButton>
                <ModeButton $edge="#f00" $fill="#f4f4f8" aria-label="Непрерывно">{icons.waves}</ModeButton>
                <ModeButton $span={2}>
                  <Icon w={11} h={20} stroke="none"><path d="M0 0l11 10L0 20z" fill="#0f0" /><path d="M0 0v20" stroke="#606060" /></Icon>
                  Пуск
                </ModeButton>
                <Rate>4.41</Rate>
              </ControlGrid>
            </PanelBody>
          </Panel>
        </Panels>

        <StatusBar>
          <StatusCell $width={189}>USB Осциллограф не подключен</StatusCell>
          <StatusCell />
          <StatusCell $width={48} $tight>1.6.1</StatusCell>
        </StatusBar>
      </Window>
    </Page>
  );
}
